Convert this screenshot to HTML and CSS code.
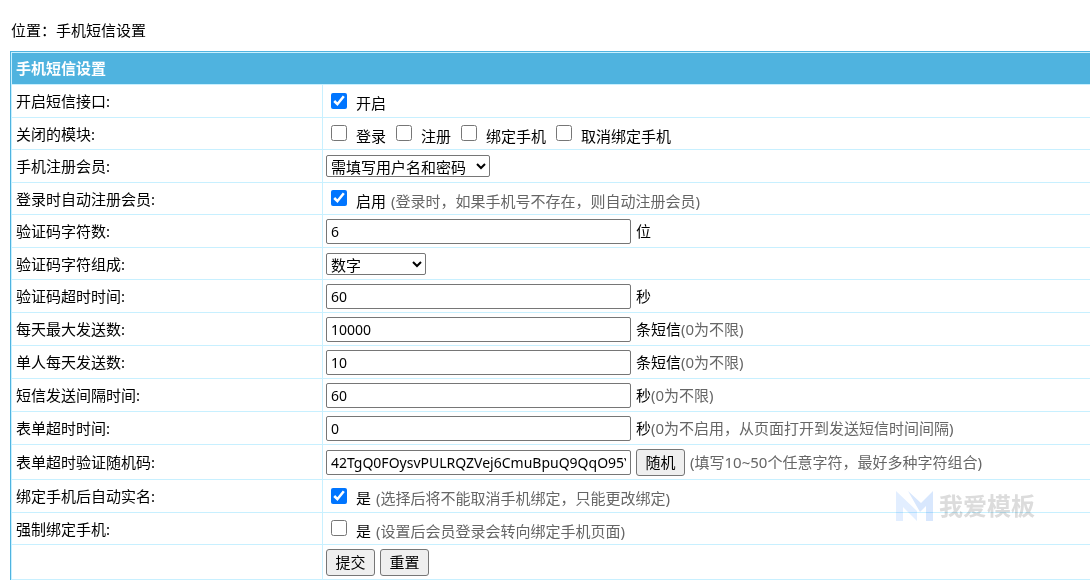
FILE: index.html
```html
<!DOCTYPE html>
<html lang="zh-CN">
<head>
<meta charset="utf-8">
<title>手机短信设置</title>
<link rel="stylesheet" href="styles.css">
</head>
<body>
<div class="location">位置：手机短信设置</div>
<form>
<table class="settings">
  <thead>
    <tr><th colspan="2">手机短信设置</th></tr>
  </thead>
  <tbody>
    <tr>
      <td class="name">开启短信接口:</td>
      <td><div class="field field-check"><label><input type="checkbox" checked>开启</label></div></td>
    </tr>
    <tr class="short">
      <td class="name">关闭的模块:</td>
      <td><div class="field field-check modules">
        <label><input type="checkbox">登录</label>
        <label><input type="checkbox">注册</label>
        <label><input type="checkbox">绑定手机</label>
        <label><input type="checkbox">取消绑定手机</label>
      </div></td>
    </tr>
    <tr>
      <td class="name"><label for="register">手机注册会员:</label></td>
      <td><div class="field"><select id="register" class="wide"><option>需填写用户名和密码</option></select></div></td>
    </tr>
    <tr class="short">
      <td class="name">登录时自动注册会员:</td>
      <td><div class="field field-check"><label><input type="checkbox" checked>启用</label><span class="hint">(登录时，如果手机号不存在，则自动注册会员)</span></div></td>
    </tr>
    <tr>
      <td class="name"><label for="length">验证码字符数:</label></td>
      <td><div class="field"><input type="text" id="length" value="6"><span>位</span></div></td>
    </tr>
    <tr class="short">
      <td class="name"><label for="charset">验证码字符组成:</label></td>
      <td><div class="field"><select id="charset" class="narrow"><option>数字</option></select></div></td>
    </tr>
    <tr>
      <td class="name"><label for="timeout">验证码超时时间:</label></td>
      <td><div class="field"><input type="text" id="timeout" value="60"><span>秒</span></div></td>
    </tr>
    <tr>
      <td class="name"><label for="daymax">每天最大发送数:</label></td>
      <td><div class="field"><input type="text" id="daymax" value="10000"><span>条短信<span class="hint">(0为不限)</span></span></div></td>
    </tr>
    <tr>
      <td class="name"><label for="usermax">单人每天发送数:</label></td>
      <td><div class="field"><input type="text" id="usermax" value="10"><span>条短信<span class="hint">(0为不限)</span></span></div></td>
    </tr>
    <tr>
      <td class="name"><label for="interval">短信发送间隔时间:</label></td>
      <td><div class="field"><input type="text" id="interval" value="60"><span>秒<span class="hint">(0为不限)</span></span></div></td>
    </tr>
    <tr>
      <td class="name"><label for="formtime">表单超时时间:</label></td>
      <td><div class="field"><input type="text" id="formtime" value="0"><span>秒<span class="hint">(0为不启用，从页面打开到发送短信时间间隔)</span></span></div></td>
    </tr>
    <tr class="tall">
      <td class="name"><label for="random">表单超时验证随机码:</label></td>
      <td><div class="field"><input type="text" id="random" value="42TgQ0FOysvPULRQZVej6CmuBpuQ9QqO95Y"><button type="button">随机</button><span class="hint">(填写10~50个任意字符，最好多种字符组合)</span></div></td>
    </tr>
    <tr>
      <td class="name">绑定手机后自动实名:</td>
      <td><div class="field field-check"><label><input type="checkbox" checked>是</label><span class="hint">(选择后将不能取消手机绑定，只能更改绑定)</span></div></td>
    </tr>
    <tr class="short">
      <td class="name">强制绑定手机:</td>
      <td><div class="field field-check"><label><input type="checkbox">是</label><span class="hint">(设置后会员登录会转向绑定手机页面)</span></div></td>
    </tr>
    <tr class="tall">
      <td class="name"></td>
      <td><div class="field"><button type="submit">提交</button><button type="reset">重置</button></div></td>
    </tr>
  </tbody>
</table>
</form>
<div class="watermark">
  <svg width="37" height="30" viewBox="0 0 37 30" aria-hidden="true">
    <path d="M0 0 21 20V30L7 16V30H0Z" fill="#e2eeff"/>
    <path d="M12 0 25 12 37 0V30H30V15L24 21Z" fill="#d8e7fd"/>
  </svg>
  <span>我爱模板</span>
</div>
</body>
</html>
```
FILE: styles.css
```css
body {
  margin: 0;
  padding: 19px 0 0 10px;
  background: #fff;
  color: #000;
  font: 15px/22px "Noto Sans", "Noto Sans CJK SC", sans-serif;
}

.location {
  padding: 0 1px;
  margin-bottom: 10px;
}

.settings {
  width: 100%;
  border: solid #4fb3df;
  border-width: 1px 0 0 1px;
  border-spacing: 0;
}

.settings tr { height: 33px; }
.settings tr.short { height: 32px; }
.settings tr.tall { height: 35px; }

.settings th {
  padding: 0 4px 2px;
  border: solid #c8f0ff;
  border-width: 1px 0 1px 1px;
  background: #4fb3df;
  color: #fff;
  text-align: left;
}

.settings td {
  padding: 0 3px;
  border: solid #c8f0ff;
  border-width: 0 0 1px 1px;
}

.settings .name {
  width: 302px;
  padding: 0 4px;
}

.field {
  display: flex;
  align-items: center;
  gap: 5px;
}

.field-check {
  padding: 4px 0 0 5px;
}

.field-check label {
  display: flex;
  align-items: center;
  gap: 9px;
}

.modules { gap: 10px; }

.hint { color: #666; }

input,
select,
button {
  box-sizing: border-box;
  margin: 0;
  font: inherit;
}

input[type="checkbox"] {
  width: 16px;
  height: 16px;
  margin-bottom: 5px;
}

input[type="text"] {
  width: 305px;
  height: 25px;
  padding: 0 4px;
  border: 1px solid #767676;
  border-radius: 2px;
  font-size: 14px;
}

select {
  height: 22px;
  padding: 0;
  border: 1px solid #767676;
  border-radius: 2px;
  background-color: #fff;
  line-height: 20px;
}

.wide { width: 164px; }
.narrow { width: 100px; }

button {
  width: 49px;
  height: 27px;
  padding: 0;
  border: 1px solid #767676;
  border-radius: 3px;
  background: #efefef;
  color: #000;
}

.watermark {
  position: absolute;
  right: 55px;
  top: 491px;
  display: flex;
  align-items: center;
  gap: 6px;
  color: #dcdcdc;
  font-size: 24px;
  font-weight: 700;
  line-height: 30px;
  mix-blend-mode: multiply;
  pointer-events: none;
}
```
